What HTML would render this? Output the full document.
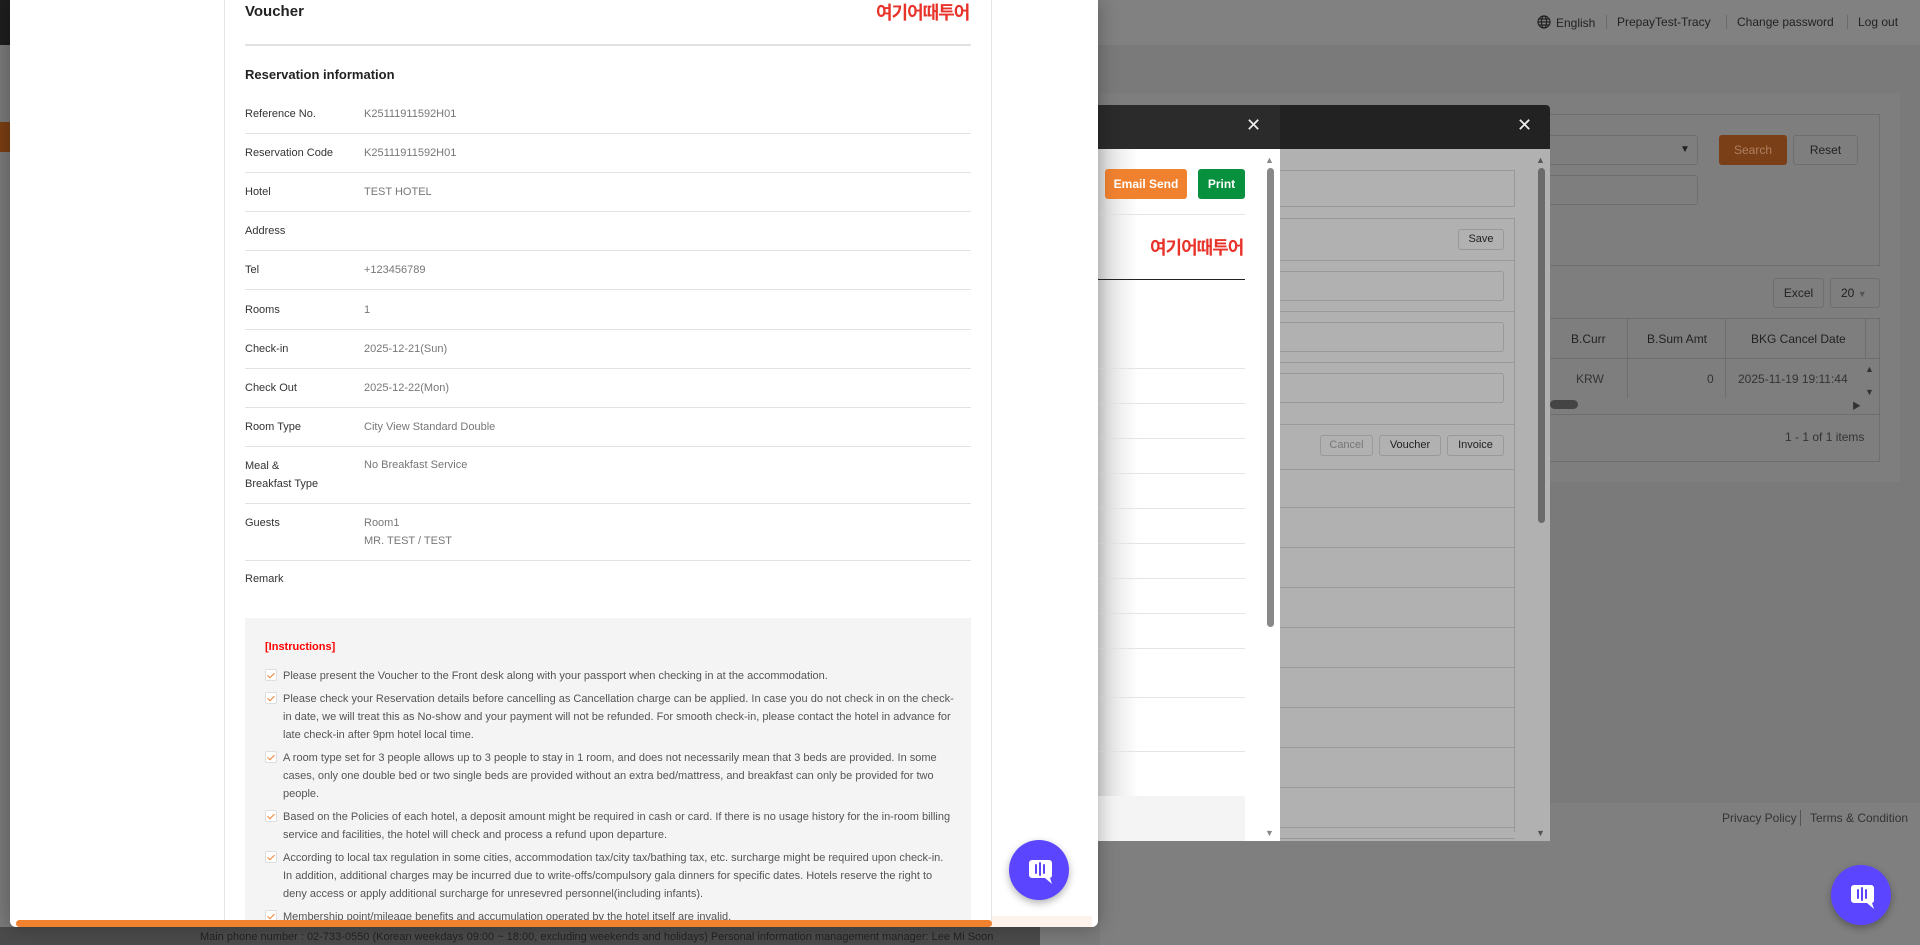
<!DOCTYPE html>
<html><head><meta charset="utf-8">
<style>
*{margin:0;padding:0;box-sizing:border-box}
body{width:1920px;height:945px;overflow:hidden;position:relative;background:#7a7a7a;font-family:"Liberation Sans","Noto Sans CJK KR",sans-serif;color:#222}
.a{position:absolute}
.t{position:absolute;white-space:nowrap;line-height:16px}
.lbl{font-size:11px;color:#333;left:245px}
.val{font-size:11px;color:#777;left:364px}
.sep{position:absolute;left:245px;width:726px;height:1px;background:#e2e2e2}
.it{position:absolute;left:265px;font-size:11px;color:#555;line-height:18px;white-space:nowrap}
.cb{position:absolute;left:0;top:2px;width:12px;height:12px;border:1px solid #ddd;background:#fff;border-radius:2px}
.cb:after{content:"";position:absolute;left:3px;top:1px;width:3px;height:6px;border:solid #f08030;border-width:0 1.5px 1.5px 0;transform:rotate(45deg)}
.it span{display:block;padding-left:18px}
.btn{position:absolute;border:1px solid #999;border-radius:3px;font-size:11px;text-align:center;color:#222}
.hl{position:absolute;height:1px;background:#9a9a9a}
.wl{position:absolute;height:1px;background:#e4e4e4;left:1098px;width:147px}
</style></head><body>
<div class="a" style="left:0;top:0;width:1920px;height:45px;background:#818181"></div>
<div class="a" style="left:0;top:0;width:10px;height:45px;background:#1e1e1e"></div>
<div class="a" style="left:0;top:122px;width:10px;height:30px;background:#7a3e12"></div>
<div class="a" style="left:1100px;top:93px;width:800px;height:389px;background:#7e7e7e"></div>
<div class="a" style="left:1100px;top:803px;width:820px;height:142px;background:#7f7f7f"></div>
<svg class="a" style="left:1537px;top:15px" width="14" height="14" viewBox="0 0 14 14" fill="none" stroke="#222" stroke-width="1.2"><circle cx="7" cy="7" r="6"/><ellipse cx="7" cy="7" rx="2.6" ry="6"/><path d="M1 7h12M2 4h10M2 10h10"/></svg>
<div class="t" style="left:1556px;top:15px;font-size:12px">English</div>
<div class="a" style="left:1606px;top:15px;width:1px;height:14px;background:#6a6a6a"></div>
<div class="t" style="left:1617px;top:14px;font-size:12px">PrepayTest-Tracy</div>
<div class="a" style="left:1726px;top:15px;width:1px;height:14px;background:#6a6a6a"></div>
<div class="t" style="left:1737px;top:14px;font-size:12px">Change password</div>
<div class="a" style="left:1847px;top:15px;width:1px;height:14px;background:#6a6a6a"></div>
<div class="t" style="left:1858px;top:14px;font-size:12px">Log out</div>
<div class="a" style="left:1100px;top:114px;width:780px;height:152px;border:1px solid #6e6e6e;border-left:none"></div>
<div class="a" style="left:1100px;top:135px;width:598px;height:30px;border:1px solid #6e6e6e;border-left:none;border-radius:0 3px 3px 0"></div>
<div class="t" style="left:1680px;top:142px;font-size:10px">▼</div>
<div class="a" style="left:1100px;top:175px;width:598px;height:30px;border:1px solid #6e6e6e;border-left:none;border-radius:0 3px 3px 0"></div>
<div class="a" style="left:1719px;top:135px;width:68px;height:30px;background:#7a3f17;border-radius:3px;color:#b08060;font-size:12px;text-align:center;line-height:30px">Search</div>
<div class="a" style="left:1793px;top:135px;width:65px;height:30px;border:1px solid #6e6e6e;border-radius:3px;font-size:12px;text-align:center;line-height:28px">Reset</div>
<div class="a" style="left:1773px;top:278px;width:51px;height:30px;border:1px solid #6e6e6e;border-radius:3px;font-size:12px;text-align:center;line-height:28px">Excel</div>
<div class="a" style="left:1830px;top:278px;width:50px;height:30px;border:1px solid #6e6e6e;border-radius:3px;font-size:12px;line-height:28px;padding-left:10px">20 <span style="font-size:9px;color:#555">▼</span></div>
<div class="a" style="left:1100px;top:318px;width:780px;height:144px;border:1px solid #6e6e6e;border-left:none"></div>
<div class="a" style="left:1100px;top:358px;width:780px;height:1px;background:#6e6e6e"></div>
<div class="a" style="left:1627px;top:318px;width:1px;height:80px;background:#6e6e6e"></div>
<div class="a" style="left:1725px;top:318px;width:1px;height:80px;background:#6e6e6e"></div>
<div class="a" style="left:1865px;top:318px;width:1px;height:40px;background:#6e6e6e"></div>
<div class="t" style="left:1571px;top:331px;font-size:12px">B.Curr</div>
<div class="t" style="left:1647px;top:331px;font-size:12px">B.Sum Amt</div>
<div class="t" style="left:1751px;top:331px;font-size:12px">BKG Cancel Date</div>
<div class="t" style="left:1576px;top:371px;font-size:12px;color:#333">KRW</div>
<div class="t" style="left:1707px;top:371px;font-size:12px;color:#333">0</div>
<div class="t" style="left:1738px;top:371px;font-size:12px;color:#333">2025-11-19 19:11:44</div>
<div class="t" style="left:1865px;top:361px;font-size:9px;color:#333">▲</div>
<div class="t" style="left:1865px;top:384px;font-size:9px;color:#333">▼</div>
<div class="a" style="left:1550px;top:400px;width:28px;height:9px;background:#444;border-radius:5px"></div>
<div class="t" style="left:1852px;top:398px;font-size:9px;color:#333">▶</div>
<div class="hl" style="left:1100px;top:414px;width:780px;background:#6e6e6e"></div>
<div class="t" style="left:1785px;top:429px;font-size:12px;color:#333">1 - 1 of 1 items</div>
<div class="t" style="left:1722px;top:810px;font-size:12px;color:#333">Privacy Policy</div>
<div class="a" style="left:1800px;top:810px;width:1px;height:16px;background:#555"></div>
<div class="t" style="left:1810px;top:810px;font-size:12px;color:#333">Terms &amp; Condition</div>
<div class="a" style="left:1098px;top:105px;width:452px;height:44px;background:#222;border-radius:0 4px 0 0"></div>
<div class="a" style="left:1280px;top:149px;width:270px;height:692px;background:#b1b1b1"></div>
<div class="t" style="left:1517px;top:117px;font-size:18px;color:#eee">✕</div>
<div class="a" style="left:1280px;top:170px;width:235px;height:37px;border:1px solid #999;border-left:none"></div>
<div class="a" style="left:1280px;top:218px;width:235px;height:252px;border:1px solid #999;border-left:none"></div>
<div class="btn" style="left:1458px;top:229px;width:46px;height:21px;line-height:19px">Save</div>
<div class="hl" style="left:1280px;top:260px;width:235px"></div>
<div class="a" style="left:1280px;top:271px;width:224px;height:30px;border:1px solid #999;border-left:none;border-radius:0 3px 3px 0"></div>
<div class="hl" style="left:1280px;top:311px;width:235px"></div>
<div class="a" style="left:1280px;top:322px;width:224px;height:30px;border:1px solid #999;border-left:none;border-radius:0 3px 3px 0"></div>
<div class="hl" style="left:1280px;top:362px;width:235px"></div>
<div class="a" style="left:1280px;top:373px;width:224px;height:30px;border:1px solid #999;border-left:none;border-radius:0 3px 3px 0"></div>
<div class="hl" style="left:1280px;top:424px;width:235px"></div>
<div class="btn" style="left:1320px;top:435px;width:53px;height:21px;line-height:19px;color:#777">Cancel</div>
<div class="btn" style="left:1379px;top:435px;width:62px;height:21px;line-height:19px">Voucher</div>
<div class="btn" style="left:1447px;top:435px;width:57px;height:21px;line-height:19px">Invoice</div>
<div class="a" style="left:1280px;top:470px;width:235px;height:362px;border-right:1px solid #999"></div>
<div class="hl" style="left:1280px;top:507px;width:235px"></div>
<div class="hl" style="left:1280px;top:547px;width:235px"></div>
<div class="hl" style="left:1280px;top:587px;width:235px"></div>
<div class="hl" style="left:1280px;top:627px;width:235px"></div>
<div class="hl" style="left:1280px;top:667px;width:235px"></div>
<div class="hl" style="left:1280px;top:707px;width:235px"></div>
<div class="hl" style="left:1280px;top:747px;width:235px"></div>
<div class="hl" style="left:1280px;top:787px;width:235px"></div>
<div class="hl" style="left:1280px;top:827px;width:235px"></div>
<div class="hl" style="left:1280px;top:838px;width:235px"></div>
<div class="t" style="left:1536px;top:152px;font-size:9px;color:#555">▲</div>
<div class="a" style="left:1538px;top:168px;width:7px;height:355px;background:#6a6a6a;border-radius:4px"></div>
<div class="t" style="left:1536px;top:825px;font-size:9px;color:#555">▼</div>
<div class="a" style="left:1098px;top:105px;width:182px;height:44px;background:#2b2b2b"></div>
<div class="t" style="left:1246px;top:117px;font-size:18px;color:#eee">✕</div>
<div class="a" style="left:1098px;top:149px;width:182px;height:692px;background:#fff"></div>
<div class="a" style="left:1098px;top:149px;width:40px;height:692px;background:linear-gradient(90deg,#dcdcdc,#fff)"></div>
<div class="a" style="left:1105px;top:169px;width:82px;height:30px;background:#f0822f;border-radius:3px;color:#fff;font-size:12px;font-weight:bold;text-align:center;line-height:30px">Email Send</div>
<div class="a" style="left:1198px;top:169px;width:47px;height:30px;background:#07913f;border-radius:3px;color:#fff;font-size:12px;font-weight:bold;text-align:center;line-height:30px">Print</div>
<div class="wl" style="top:214px"></div>
<div class="t" style="left:1150px;top:236px;font-size:18px;font-weight:bold;color:#e8332a;letter-spacing:-1px;font-family:'Noto Sans CJK KR',sans-serif;line-height:22px">여기어때투어</div>
<div class="a" style="left:1098px;top:279px;width:147px;height:1px;background:#222"></div>
<div class="wl" style="top:368px"></div><div class="wl" style="top:403px"></div><div class="wl" style="top:438px"></div>
<div class="wl" style="top:473px"></div>
<div class="wl" style="top:508px"></div><div class="wl" style="top:543px"></div><div class="wl" style="top:578px"></div>
<div class="wl" style="top:613px"></div><div class="wl" style="top:648px"></div><div class="wl" style="top:697px"></div><div class="wl" style="top:751px"></div>
<div class="a" style="left:1098px;top:796px;width:147px;height:45px;background:#f4f4f4"></div>
<div class="t" style="left:1265px;top:152px;font-size:9px;color:#888">▲</div>
<div class="a" style="left:1267px;top:168px;width:7px;height:459px;background:#888;border-radius:4px"></div>
<div class="t" style="left:1265px;top:825px;font-size:9px;color:#888">▼</div>
<div class="a" style="left:0;top:927px;width:1040px;height:18px;background:#4b4b4b"></div>
<div class="t" style="left:200px;top:929px;font-size:11px;color:#222">Main phone number : 02-733-0550 (Korean weekdays 09:00 ~ 18:00, excluding weekends and holidays) Personal information management manager: Lee Mi Soon</div>
<div class="a" style="left:10px;top:0;width:1088px;height:927px;background:#fff;border-radius:0 0 6px 6px;box-shadow:0 0 20px rgba(0,0,0,.3)"></div>
<div class="a" style="left:224px;top:0;width:1px;height:927px;background:#e6e6e6"></div>
<div class="a" style="left:991px;top:0;width:1px;height:927px;background:#e6e6e6"></div>
<div class="a" style="left:992px;top:916px;width:100px;height:11px;background:#fdf3ec"></div>
<div class="t" style="left:245px;top:2px;font-size:15px;font-weight:bold;line-height:20px">Voucher</div>
<div class="t" style="left:876px;top:1px;font-size:18px;font-weight:bold;color:#e8332a;letter-spacing:-1px;font-family:'Noto Sans CJK KR',sans-serif;line-height:22px">여기어때투어</div>
<div class="sep" style="top:44px;height:2px"></div>
<div class="t" style="left:245px;top:66px;font-size:13px;font-weight:bold;line-height:18px">Reservation information</div>
<div class="t lbl" style="top:106px">Reference No.</div><div class="t val" style="top:106px">K25111911592H01</div>
<div class="sep" style="top:133px"></div>
<div class="t lbl" style="top:145px">Reservation Code</div><div class="t val" style="top:145px">K25111911592H01</div>
<div class="sep" style="top:172px"></div>
<div class="t lbl" style="top:184px">Hotel</div><div class="t val" style="top:184px">TEST HOTEL</div>
<div class="sep" style="top:211px"></div>
<div class="t lbl" style="top:223px">Address</div>
<div class="sep" style="top:250px"></div>
<div class="t lbl" style="top:262px">Tel</div><div class="t val" style="top:262px">+123456789</div>
<div class="sep" style="top:289px"></div>
<div class="t lbl" style="top:302px">Rooms</div><div class="t val" style="top:302px">1</div>
<div class="sep" style="top:329px"></div>
<div class="t lbl" style="top:341px">Check-in</div><div class="t val" style="top:341px">2025-12-21(Sun)</div>
<div class="sep" style="top:368px"></div>
<div class="t lbl" style="top:380px">Check Out</div><div class="t val" style="top:380px">2025-12-22(Mon)</div>
<div class="sep" style="top:407px"></div>
<div class="t lbl" style="top:419px">Room Type</div><div class="t val" style="top:419px">City View Standard Double</div>
<div class="sep" style="top:446px"></div>
<div class="t lbl" style="top:457px;line-height:18px">Meal &amp;<br>Breakfast Type</div><div class="t val" style="top:457px">No Breakfast Service</div>
<div class="sep" style="top:503px"></div>
<div class="t lbl" style="top:515px">Guests</div><div class="t val" style="top:514px;line-height:18px">Room1<br>MR. TEST / TEST</div>
<div class="sep" style="top:560px"></div>
<div class="t lbl" style="top:571px">Remark</div>
<div class="a" style="left:245px;top:618px;width:726px;height:309px;background:#f4f4f4"></div>
<div class="t" style="left:265px;top:639px;font-size:11px;color:#f00;font-weight:bold">[Instructions]</div>
<div class="it" style="top:667px"><i class="cb"></i><span>Please present the Voucher to the Front desk along with your passport when checking in at the accommodation.</span></div>
<div class="it" style="top:690px"><i class="cb"></i><span>Please check your Reservation details before cancelling as Cancellation charge can be applied. In case you do not check in on the check-<br>in date, we will treat this as No-show and your payment will not be refunded. For smooth check-in, please contact the hotel in advance for<br>late check-in after 9pm hotel local time.</span></div>
<div class="it" style="top:749px"><i class="cb"></i><span>A room type set for 3 people allows up to 3 people to stay in 1 room, and does not necessarily mean that 3 beds are provided. In some<br>cases, only one double bed or two single beds are provided without an extra bed/mattress, and breakfast can only be provided for two<br>people.</span></div>
<div class="it" style="top:808px"><i class="cb"></i><span>Based on the Policies of each hotel, a deposit amount might be required in cash or card. If there is no usage history for the in-room billing<br>service and facilities, the hotel will check and process a refund upon departure.</span></div>
<div class="it" style="top:849px"><i class="cb"></i><span>According to local tax regulation in some cities, accommodation tax/city tax/bathing tax, etc. surcharge might be required upon check-in.<br>In addition, additional charges may be incurred due to write-offs/compulsory gala dinners for specific dates. Hotels reserve the right to<br>deny access or apply additional surcharge for unresevred personnel(including infants).</span></div>
<div class="it" style="top:908px;height:13px;overflow:hidden"><i class="cb"></i><span>Membership point/mileage benefits and accumulation operated by the hotel itself are invalid.</span></div>
<div class="a" style="left:16px;top:920px;width:976px;height:7px;background:#f0822f;border-radius:4px"></div>
<div class="a" style="left:1009px;top:840px;width:60px;height:60px;border-radius:50%;background:#5b45ff;box-shadow:0 3px 8px rgba(0,0,0,.3)"></div>
<svg class="a" style="left:1021px;top:852px" width="36" height="36" viewBox="0 0 36 36"><path d="M8 8h20a3 3 0 0 1 3 3v12a3 3 0 0 1-2 3l2 6-7-6H11a3 3 0 0 1-3-3V11a3 3 0 0 1 3-3z" fill="#fff"/><path d="M15 13v8M19 11v12M23 13v8" stroke="#5b45ff" stroke-width="2" stroke-linecap="round"/></svg>
<div class="a" style="left:1831px;top:865px;width:60px;height:60px;border-radius:50%;background:#5b45ff;box-shadow:0 3px 8px rgba(0,0,0,.3)"></div>
<svg class="a" style="left:1843px;top:877px" width="36" height="36" viewBox="0 0 36 36"><path d="M8 8h20a3 3 0 0 1 3 3v12a3 3 0 0 1-2 3l2 6-7-6H11a3 3 0 0 1-3-3V11a3 3 0 0 1 3-3z" fill="#fff"/><path d="M15 13v8M19 11v12M23 13v8" stroke="#5b45ff" stroke-width="2" stroke-linecap="round"/></svg>
</body></html>
